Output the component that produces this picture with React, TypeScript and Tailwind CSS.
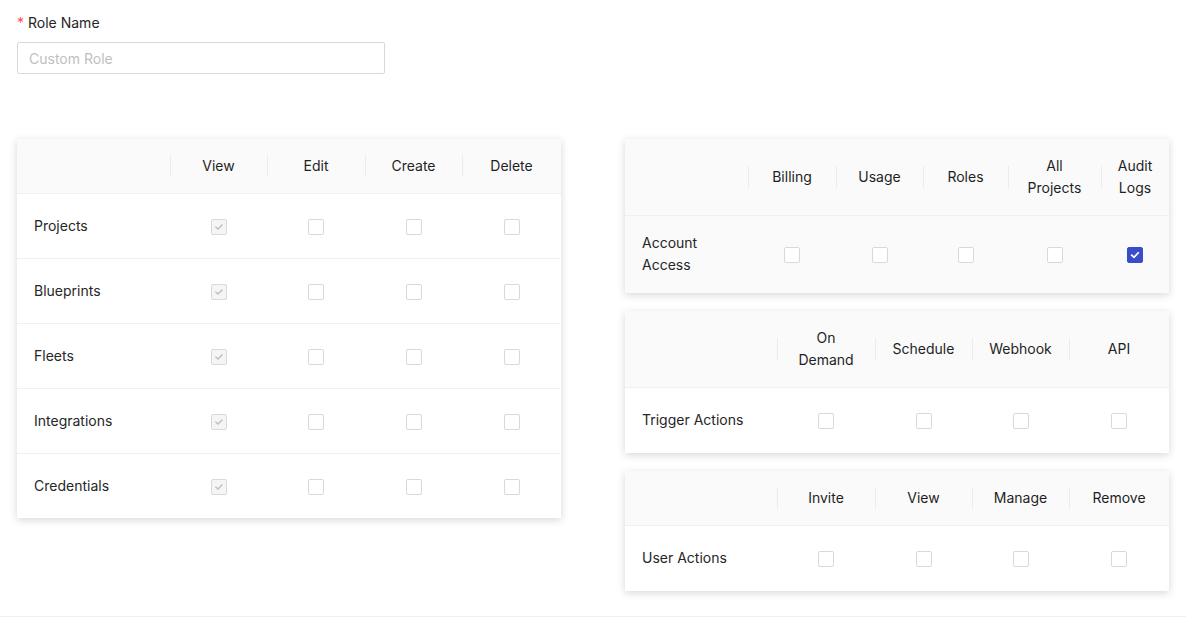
import React from "react";

type Col = { label: React.ReactNode; w: number };

function Box({ state }: { state: "off" | "disabled" | "on" }) {
  if (state === "on") {
    return (
      <span className="inline-flex h-4 w-4 items-center justify-center rounded-[2px] border border-[#3b4cca] bg-[#3b4cca] align-middle">
        <svg viewBox="0 0 16 16" className="h-4 w-4">
          <path d="M4.3 8.2 L6.9 10.6 L11.6 5.6" fill="none" stroke="#fff" strokeWidth="2" strokeLinecap="square" />
        </svg>
      </span>
    );
  }
  if (state === "disabled") {
    return (
      <span className="inline-flex h-4 w-4 items-center justify-center rounded-[2px] border border-[#d9d9d9] bg-[#f5f5f5] align-middle">
        <svg viewBox="0 0 16 16" className="h-4 w-4">
          <path d="M4.5 8.2 L6.9 10.4 L11.4 5.8" fill="none" stroke="#bfbfbf" strokeWidth="1.6" strokeLinecap="square" />
        </svg>
      </span>
    );
  }
  return <span className="inline-block h-4 w-4 rounded-[2px] border border-[#d9d9d9] bg-white align-middle" />;
}

function PermTable({
  cols,
  firstW,
  rows,
  headH,
  rowH,
}: {
  cols: Col[];
  firstW: number;
  rows: { name: React.ReactNode; cells: ("off" | "disabled" | "on")[]; hover?: boolean }[];
  headH: string;
  rowH: string;
}) {
  return (
    <div className="bg-white shadow-[0_2px_8px_rgba(0,0,0,0.16)]">
      <table className="w-full table-fixed border-collapse text-[14px] leading-[22px] text-[#262626]">
        <colgroup>
          <col style={{ width: firstW }} />
          {cols.map((c, i) => (
            <col key={i} style={{ width: c.w }} />
          ))}
        </colgroup>
        <thead>
          <tr className={`${headH} border-b border-[#f0f0f0] bg-[#fafafa]`}>
            <th className="px-4" />
            {cols.map((c, i) => (
              <th key={i} className="relative px-2 text-center font-normal text-[#1f1f1f]">
                <span className="absolute left-0 top-1/2 h-[22px] w-px -translate-y-1/2 bg-[#ececec]" />
                {c.label}
              </th>
            ))}
          </tr>
        </thead>
        <tbody>
          {rows.map((r, ri) => (
            <tr key={ri} className={`${rowH} border-b border-[#f0f0f0] last:border-b-0 ${r.hover ? "bg-[#fafafa]" : ""}`}>
              <td className="px-[17px] font-normal">{r.name}</td>
              {r.cells.map((s, ci) => (
                <td key={ci} className="text-center">
                  <Box state={s} />
                </td>
              ))}
            </tr>
          ))}
        </tbody>
      </table>
    </div>
  );
}

export default function App() {
  const leftRows = ["Projects", "Blueprints", "Fleets", "Integrations", "Credentials"].map((n) => ({
    name: n,
    cells: ["disabled", "off", "off", "off"] as ("off" | "disabled" | "on")[],
  }));

  return (
    <div className="min-h-[617px] bg-white font-['Inter',sans-serif] text-[14px] text-[#262626]">
      <div className="px-[17px] pt-[12px]">
        <label className="mb-[8px] flex h-[22px] items-center leading-[22px]">
          <span className="mr-[4px] text-[#ff4d4f]">*</span>
          <span>Role Name</span>
        </label>
        <input
          className="h-8 w-[368px] rounded-[2px] border border-[#d9d9d9] px-[11px] text-[14px] placeholder:text-[#bfbfbf] outline-none"
          placeholder="Custom Role"
        />

        <div className="mt-[65px] grid grid-cols-2 items-start gap-16">
          <PermTable
            firstW={153}
            headH="h-[54px]"
            rowH="h-[65px]"
            cols={[
              { label: "View", w: 97 },
              { label: "Edit", w: 98 },
              { label: "Create", w: 97 },
              { label: "Delete", w: 99 },
            ]}
            rows={leftRows}
          />
          <div className="flex flex-col gap-[18px]">
            <PermTable
              firstW={123}
              headH="h-[76px]"
              rowH="h-[78px]"
              cols={[
                { label: "Billing", w: 88 },
                { label: "Usage", w: 87 },
                { label: "Roles", w: 85 },
                { label: <>All<br />Projects</>, w: 93 },
                { label: <>Audit<br />Logs</>, w: 68 },
              ]}
              rows={[
                { name: <>Account<br />Access</>, cells: ["off", "off", "off", "off", "on"], hover: true },
              ]}
            />
            <PermTable
              firstW={152}
              headH="h-[76px]"
              rowH="h-[66px]"
              cols={[
                { label: <>On<br />Demand</>, w: 98 },
                { label: "Schedule", w: 97 },
                { label: "Webhook", w: 97 },
                { label: "API", w: 100 },
              ]}
              rows={[{ name: "Trigger Actions", cells: ["off", "off", "off", "off"] }]}
            />
            <PermTable
              firstW={152}
              headH="h-[54px]"
              rowH="h-[66px]"
              cols={[
                { label: "Invite", w: 98 },
                { label: "View", w: 97 },
                { label: "Manage", w: 97 },
                { label: "Remove", w: 100 },
              ]}
              rows={[{ name: "User Actions", cells: ["off", "off", "off", "off"] }]}
            />
          </div>
        </div>
      </div>
      <div className="mt-[25px] border-t border-[#f0f0f0]" />
    </div>
  );
}
